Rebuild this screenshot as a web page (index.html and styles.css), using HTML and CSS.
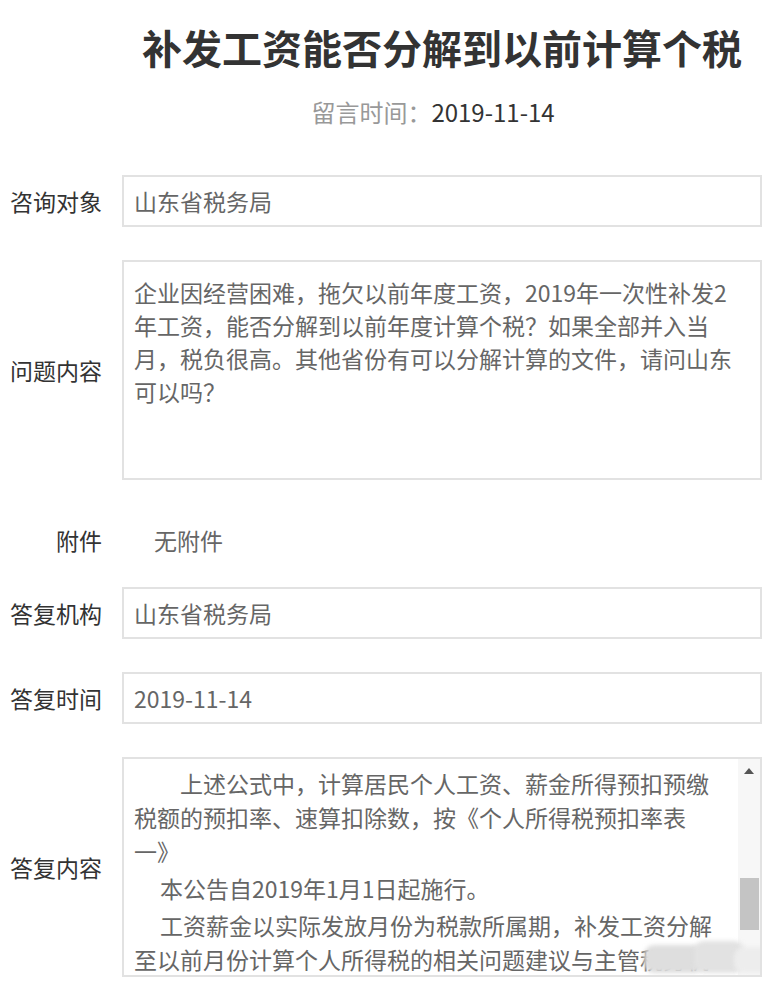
FILE: index.html
```html
<!DOCTYPE html>
<html lang="zh-CN">
<head>
<meta charset="utf-8">
<title>补发工资能否分解到以前计算个税</title>
<link rel="stylesheet" href="styles.css">
</head>
<body>
<div class="page">
  <h1 class="title">补发工资能否分解到以前计算个税</h1>
  <div class="meta"><span class="meta-label">留言时间：</span><span class="meta-date">2019-11-14</span></div>

  <div class="row first">
    <div class="label">咨询对象</div>
    <div class="box">山东省税务局</div>
  </div>

  <div class="row">
    <div class="label">问题内容</div>
    <div class="box area">
      <div class="line">企业因经营困难，拖欠以前年度工资，2019年一次性补发2</div>
      <div class="line">年工资，能否分解到以前年度计算个税？如果全部并入当</div>
      <div class="line">月，税负很高。其他省份有可以分解计算的文件，请问山东</div>
      <div class="line">可以吗？</div>
    </div>
  </div>

  <div class="row attach">
    <div class="label">附件</div>
    <div class="plain">无附件</div>
  </div>

  <div class="row after-attach">
    <div class="label">答复机构</div>
    <div class="box">山东省税务局</div>
  </div>

  <div class="row">
    <div class="label">答复时间</div>
    <div class="box">2019-11-14</div>
  </div>

  <div class="row">
    <div class="label">答复内容</div>
    <div class="answer">
      <div class="answer-text">
        <div class="para">
          <div class="line indent2">上述公式中，计算居民个人工资、薪金所得预扣预缴</div>
          <div class="line">税额的预扣率、速算扣除数，按《个人所得税预扣率表</div>
          <div class="line">一》</div>
        </div>
        <div class="para">
          <div class="line indent1">本公告自2019年1月1日起施行。</div>
        </div>
        <div class="para">
          <div class="line indent1">工资薪金以实际发放月份为税款所属期，补发工资分解</div>
          <div class="line">至以前月份计算个人所得税的相关问题建议与主管税务机</div>
          <div class="line">关联系咨询。</div>
        </div>
      </div>
      <div class="scrollbar">
        <div class="arrow-up"></div>
        <div class="thumb"></div>
      </div>
      <div class="smudge s1"></div>
      <div class="smudge s2"></div>
      <div class="smudge s3"></div>
    </div>
  </div>
</div>
</body>
</html>
```

FILE: styles.css
```css
html, body {
  margin: 0;
  padding: 0;
  background: #ffffff;
}

body {
  font-family: "Noto Sans CJK SC", "Noto Sans", "DejaVu Sans", sans-serif;
  color: #333333;
}

.page {
  width: 769px;
  padding-top: 18px;
  box-sizing: border-box;
}

.title {
  margin: 0 7px 0 122px;
  font-size: 40px;
  line-height: 58px;
  font-weight: 700;
  text-align: center;
  color: #333333;
}

.meta {
  margin: 16px 25px 0 122px;
  text-align: center;
  font-size: 24px;
  line-height: 40px;
}

.meta-label {
  color: #999999;
}

.meta-date {
  color: #333333;
}

.row {
  display: flex;
  align-items: center;
  margin: 33px 7px 0 0;
}

.row.first {
  margin-top: 43px;
}

.label {
  width: 102px;
  flex: 0 0 102px;
  margin-right: 20px;
  text-align: right;
  font-size: 23px;
  color: #333333;
  white-space: nowrap;
}

.box {
  flex: 1;
  height: 52px;
  box-sizing: border-box;
  border: 2px solid #e2e2e2;
  padding: 0 10px;
  display: flex;
  align-items: center;
  font-size: 23px;
  color: #666666;
  white-space: nowrap;
}

.box.area {
  height: 220px;
  display: block;
  padding-top: 14px;
  line-height: 33px;
}

.line {
  white-space: nowrap;
}

.attach {
  height: 54px;
}

.row.after-attach {
  margin-top: 20px;
}

.plain {
  font-size: 23px;
  color: #666666;
  padding-left: 32px;
}

.answer {
  flex: 1;
  height: 220px;
  box-sizing: border-box;
  border: 2px solid #e2e2e2;
  position: relative;
  display: flex;
  align-items: stretch;
  padding-left: 10px;
  overflow: hidden;
  font-size: 23px;
  line-height: 34px;
  color: #666666;
}

.answer-text {
  flex: 1;
  padding-top: 7px;
  overflow: hidden;
}

.para + .para {
  margin-top: 3px;
}

.indent2 {
  padding-left: 46px;
}

.indent1 {
  padding-left: 26px;
}

.scrollbar {
  flex: 0 0 22px;
  width: 22px;
  background: #f7f7f7;
  display: flex;
  flex-direction: column;
  align-items: center;
}

.arrow-up {
  margin-top: 9px;
  width: 0;
  height: 0;
  border-left: 5px solid transparent;
  border-right: 5px solid transparent;
  border-bottom: 6px solid #555555;
}

.thumb {
  margin-top: 104px;
  width: 19px;
  height: 52px;
  background: #c4c4c4;
}

.smudge {
  position: absolute;
  border-radius: 10px;
  filter: blur(2px);
}

.s1 {
  left: 520px;
  top: 186px;
  width: 60px;
  height: 28px;
  background: #dedede;
}

.s2 {
  left: 570px;
  top: 182px;
  width: 50px;
  height: 32px;
  background: #e2e2e2;
}

.s3 {
  left: 610px;
  top: 188px;
  width: 40px;
  height: 26px;
  background: #ededed;
}
```
